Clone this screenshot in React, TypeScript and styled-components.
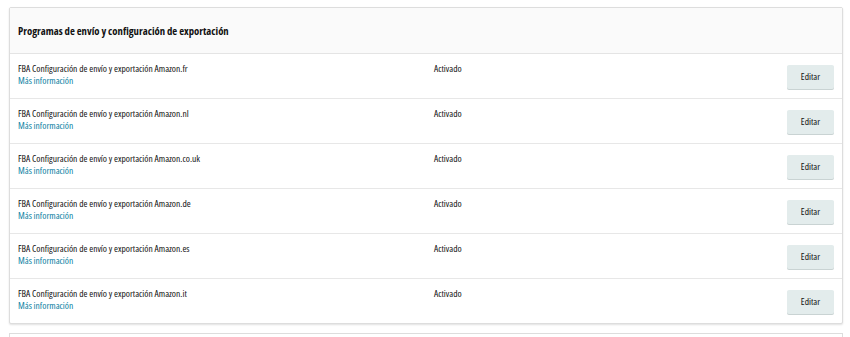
import React from 'react';
import styled, { createGlobalStyle } from 'styled-components';

const GlobalStyle = createGlobalStyle`
	body {
		margin: 0;
		background: #ffffff;
		font-family: 'Open Sans', 'DejaVu Sans Condensed', sans-serif;
		font-stretch: 75%;
		color: #111111;
	}
`;

const Page = styled.div`
	padding: 7px 7px 0 9px;
	display: flex;
	flex-direction: column;
	gap: 9px;
`;

const Card = styled.section`
	border: 1px solid #dddddd;
	border-radius: 2px;
	background: #ffffff;
	box-shadow: 0 1px 2px rgba(0, 0, 0, 0.12);
`;

const CardHeader = styled.header`
	display: flex;
	align-items: center;
	height: 45px;
	padding: 0 8px;
	background: #fafafa;
	border-bottom: 1px solid #e4e4e4;
	font-size: 10.7px;
	font-weight: 700;
	color: #111111;
`;

const Row = styled.div`
	display: grid;
	grid-template-columns: 416px 1fr auto;
	height: 44px;
	padding: 0 8px;
	border-top: 1px solid #e7e7e7;
	&:first-of-type {
		border-top: none;
	}
`;

const NameCell = styled.div`
	display: flex;
	flex-direction: column;
	padding-top: 9px;
	font-size: 9.5px;
	line-height: 12px;
`;

const StatusCell = styled.div`
	padding-top: 9px;
	font-size: 9.5px;
	line-height: 12px;
`;

const InfoLink = styled.a`
	color: #0a7fa3;
	text-decoration: none;
`;

const ActionCell = styled.div`
	display: flex;
	align-items: center;
	padding-top: 1px;
`;

const EditButton = styled.button`
	width: 47px;
	height: 24px;
	border: none;
	border-radius: 2px;
	background: #e3ecec;
	box-shadow: 0 1px 0 #c9d3d3;
	font-family: inherit;
	font-stretch: inherit;
	font-size: 9.5px;
	color: #111111;
	padding: 0;
`;

const Rest = styled.div`
	height: 3px;
	border: 1px solid #dddddd;
	border-bottom: none;
`;

const markets = ['fr', 'nl', 'co.uk', 'de', 'es', 'it'];

const App = () => (
	<>
		<GlobalStyle />
		<Page>
			<Card>
				<CardHeader>Programas de envío y configuración de exportación</CardHeader>
				<div>
					{markets.map((m) => (
						<Row key={m}>
							<NameCell>
								<span>FBA Configuración de envío y exportación Amazon.{m}</span>
								<InfoLink href="#">Más información</InfoLink>
							</NameCell>
							<StatusCell>Activado</StatusCell>
							<ActionCell>
								<EditButton>Editar</EditButton>
							</ActionCell>
						</Row>
					))}
				</div>
			</Card>
			<Rest />
		</Page>
	</>
);

export default App;
